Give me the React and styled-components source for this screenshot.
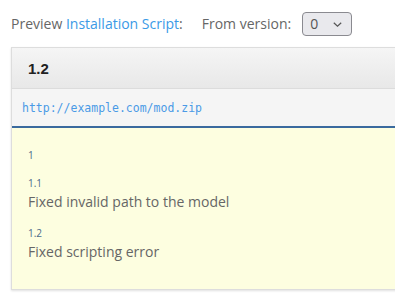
import React from 'react';
import styled, { createGlobalStyle } from 'styled-components';

const GlobalStyle = createGlobalStyle`
  html, body {
    margin: 0;
    padding: 0;
    background: #fff;
  }
  body {
    font-family: "Open Sans", "Noto Sans", sans-serif;
    font-size: 14px;
    color: #555;
  }
`;

const Page = styled.div`
  width: 395px;
  height: 301px;
  overflow: hidden;
  padding: 12px 0 0 11px;
  box-sizing: border-box;
`;

const Toolbar = styled.div`
  display: flex;
  align-items: center;
  height: 24px;
  line-height: 20px;
  color: #666;
`;

const Link = styled.a`
  color: #3a9ae6;
  text-decoration: none;
`;

const VersionLabel = styled.span`
  margin-left: 19px;
  margin-right: 11px;
`;

const Select = styled.div`
  width: 50px;
  height: 24px;
  box-sizing: border-box;
  border: 1px solid #8a8a90;
  border-radius: 4px;
  background: #e9e9ed;
  display: flex;
  align-items: center;
  justify-content: space-between;
  padding: 0 9px 0 7px;
  color: #555;
`;

const Panel = styled.div`
  margin-top: 11px;
  width: 420px;
  border: 1px solid #ddd;
  border-right: none;
  box-shadow: 0 1px 2px rgba(0, 0, 0, 0.12);
  background: #fff;
`;

const Heading = styled.div`
  height: 40px;
  display: flex;
  align-items: center;
  padding: 0 16px;
  background: linear-gradient(to bottom, #f5f5f5 0%, #e8e8e8 100%);
  border-bottom: 1px solid #dcdcdc;
  font-family: "Liberation Sans", Arial, sans-serif;
  font-weight: bold;
  font-size: 15px;
  color: #222;
`;

const UrlRow = styled.div`
  height: 37px;
  display: flex;
  align-items: center;
  padding: 0 10px;
  background: #f5f5f5;
  border-bottom: 2px solid #3a6a9e;
  font-family: "DejaVu Sans Mono", "Liberation Mono", monospace;
  font-size: 11.5px;
  color: #4a9ae6;
`;

const Body = styled.div`
  background: #fdfee0;
  padding: 21px 16px 27px;
`;

const Entry = styled.div`
  & + & {
    margin-top: 15px;
  }
`;

const Version = styled.div`
  font-size: 10px;
  line-height: 13px;
  color: #4b6a8a;
`;

const Note = styled.div`
  margin-top: 2px;
  font-size: 14px;
  line-height: 20px;
  color: #666;
`;

const Chevron = () => (
  <svg width="9" height="5" viewBox="0 0 9 5">
    <path d="M0.8 0.8 L4.5 4.2 L8.2 0.8" fill="none" stroke="#555" strokeWidth="1.2" />
  </svg>
);

const changes = [
  { version: '1', note: null },
  { version: '1.1', note: 'Fixed invalid path to the model' },
  { version: '1.2', note: 'Fixed scripting error' },
];

export default function App() {
  return (
    <>
      <GlobalStyle />
      <Page>
        <Toolbar>
          <span>
            Preview <Link>Installation Script</Link>:
          </span>
          <VersionLabel>From version:</VersionLabel>
          <Select>
            <span>0</span>
            <Chevron />
          </Select>
        </Toolbar>
        <Panel>
          <Heading>1.2</Heading>
          <UrlRow>http://example.com/mod.zip</UrlRow>
          <Body>
            {changes.map(c => (
              <Entry key={c.version}>
                <Version>{c.version}</Version>
                {c.note && <Note>{c.note}</Note>}
              </Entry>
            ))}
          </Body>
        </Panel>
      </Page>
    </>
  );
}
